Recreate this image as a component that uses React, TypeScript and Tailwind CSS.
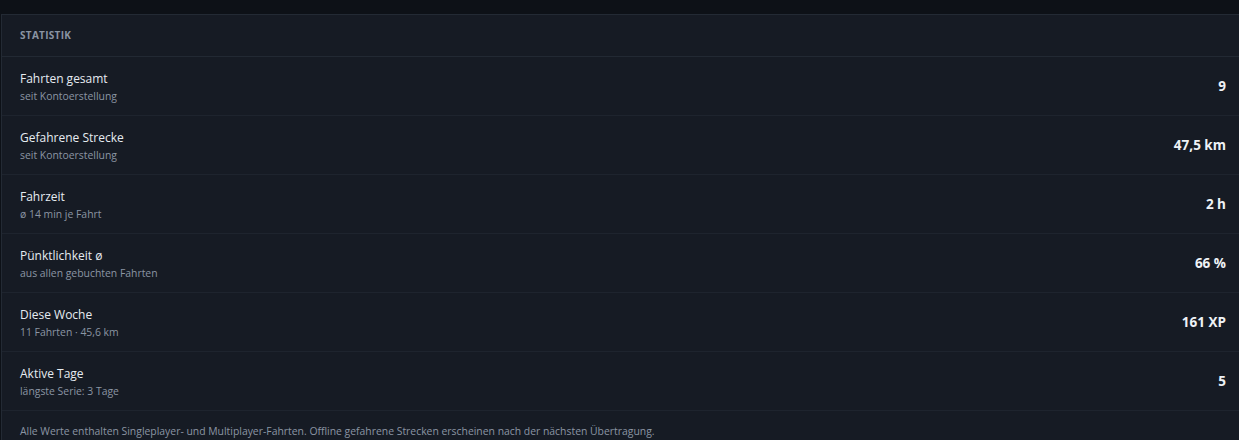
const stats = [
  { label: "Fahrten gesamt", hint: "seit Kontoerstellung", value: "9" },
  { label: "Gefahrene Strecke", hint: "seit Kontoerstellung", value: "47,5 km" },
  { label: "Fahrzeit", hint: "ø 14 min je Fahrt", value: "2 h" },
  { label: "Pünktlichkeit ø", hint: "aus allen gebuchten Fahrten", value: "66 %" },
  { label: "Diese Woche", hint: "11 Fahrten · 45,6 km", value: "161 XP" },
  { label: "Aktive Tage", hint: "längste Serie: 3 Tage", value: "5" },
];

export default function App() {
  return (
    <div className="h-[440px] overflow-hidden bg-[#0d1117] pt-[14px] pl-px font-['Open_Sans',sans-serif]">
      <div className="border-l border-t border-[#232a34] bg-[#161b24] h-full">
        <div className="h-[42px] flex items-center px-[18px] border-b border-[#222933]">
          <span className="text-[10px] font-bold tracking-[0.03em] text-[#8a94a3] uppercase">Statistik</span>
        </div>
        {stats.map((s) => (
          <div key={s.label} className="h-[59px] flex items-center justify-between pl-[18px] pr-[13px] border-b border-[#1e242e]">
            <div className="flex flex-col pt-[2px]">
              <span className="text-[12px] leading-[18px] text-[#e6ebf1]">{s.label}</span>
              <span className="text-[10.4px] leading-[16px] text-[#8b95a3]">{s.hint}</span>
            </div>
            <span className="text-[13.5px] font-bold text-[#eef2f6]">{s.value}</span>
          </div>
        ))}
        <div className="pl-[18px] pt-[13px] text-[10.4px] text-[#8b95a3]">
          Alle Werte enthalten Singleplayer- und Multiplayer-Fahrten. Offline gefahrene Strecken erscheinen nach der nächsten Übertragung.
        </div>
      </div>
    </div>
  );
}
